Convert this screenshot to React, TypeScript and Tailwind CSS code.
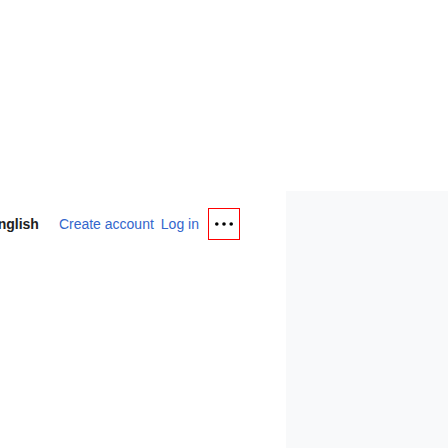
import React from 'react';

// ─── Ellipsis icon ─────────────────────────────────────────
function Ellipsis() {
  return (
    <svg width="18" height="18" viewBox="0 0 20 20" className="fill-[#000]">
      <circle cx="2" cy="10" r="2" />
      <circle cx="10" cy="10" r="2" />
      <circle cx="18" cy="10" r="2" />
    </svg>
  );
}

export default function App() {
  return (
    <div className="flex h-[448px] w-[448px] overflow-hidden bg-white font-['Liberation_Sans',Arial,sans-serif] text-[14px]">
      {/* Header tools */}
      <div className="w-[286px] shrink-0 pt-[208px]">
        <div className="flex h-[32px] items-center">
          <span className="ml-[-11.7px] font-bold text-[#202122]">English</span>
          <a href="#" className="ml-[20px] text-[#3366cc]">Create account</a>
          <a href="#" className="ml-[7px] text-[#3366cc]">Log in</a>
          <button className="ml-[9px] flex h-[32px] w-[32px] items-center justify-center border border-[#ff0000]">
            <Ellipsis />
          </button>
        </div>
      </div>

      {/* Side panel */}
      <div className="mt-[191px] flex-1 bg-[#f8f9fa]" />
    </div>
  );
}
